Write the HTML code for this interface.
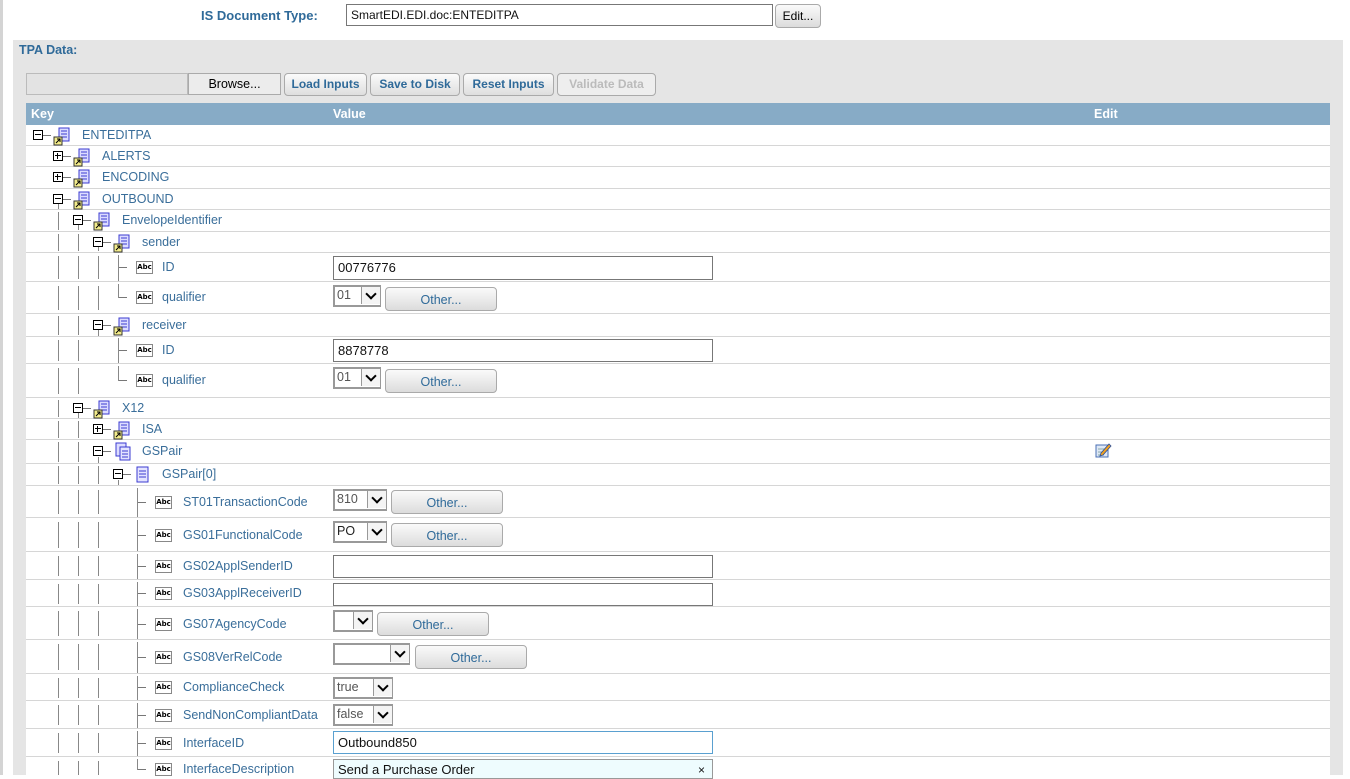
<!DOCTYPE html>
<html><head><meta charset="utf-8">
<style>
*{box-sizing:border-box;margin:0;padding:0}
body{width:1350px;height:775px;overflow:hidden;background:#fff;font-family:"Liberation Sans",Arial,sans-serif;font-size:12px;position:relative}
.a{position:absolute}
.lbl{position:absolute;color:#3a6e9a;font-size:12.5px;white-space:nowrap;line-height:14px}
.row{position:absolute;left:26px;width:1304px;border-bottom:1px solid #d6d6d6;background:#fff}
.box{position:absolute;width:10px;height:10px;border:1px solid #000;background:#fff}
.box:before{content:"";position:absolute;left:1px;top:3px;width:6px;height:1px;background:#000}
.box.p:after{content:"";position:absolute;left:3px;top:1px;width:1px;height:6px;background:#000}
.tk{position:absolute;height:1px;width:8px;background:#777}
.v{position:absolute;width:1px;background:#888}
.abc{position:absolute;width:17px;height:13px;border:1px solid #888;font-size:7px;font-weight:bold;line-height:11px;text-align:center;color:#000;background:#fff;font-family:"DejaVu Sans",sans-serif}
.inp{position:absolute;border:1px solid #777;background:#fff;height:23px;font-size:13px;padding:3px 4px;color:#111;width:380px;left:333px}
.sel{position:absolute;border:2px solid #999;border-right:1px solid #999;background:#fff;height:21px;font-size:12.5px;color:#555;padding:1px 2px;left:333px}
.sel i{position:absolute;right:0;top:0;width:19px;height:17px;border-left:1px solid #999;background:#f4f4f4}
.sel i:after{content:"";position:absolute;left:5px;top:3px;width:6px;height:6px;border-right:2px solid #000;border-bottom:2px solid #000;transform:rotate(45deg)}
.oth{position:absolute;height:24px;border:1px solid #aaa;border-radius:4px;background:linear-gradient(#fafafa,#dcdcdc);color:#2f6a99;font-size:12.5px;text-align:center;line-height:24px;width:112px}
.btn{position:absolute;top:73px;height:23px;border:1px solid #aaa;border-radius:4px;background:linear-gradient(#fbfbfb,#dedede);color:#2f6a99;font-weight:bold;font-size:12px;text-align:center;line-height:21px}
</style></head><body>
<svg width="0" height="0" style="position:absolute"><defs>
<symbol id="doc" viewBox="0 0 18 20"><rect x="6" y="1" width="10" height="13" fill="#dcdcff" stroke="#3b3bd0"/><path d="M8 4h6M8 7h6M8 10h6" stroke="#3b3bd0"/><rect x="1" y="10" width="8" height="8" fill="#f3ec8a" stroke="#333"/><path d="M3 16l4-4M4 12h3v3" stroke="#000" fill="none"/></symbol>
<symbol id="dl" viewBox="0 0 18 20"><rect x="2" y="1" width="10" height="13" fill="#dcdcff" stroke="#3b3bd0"/><rect x="6" y="5" width="10" height="13" fill="#e4e4ff" stroke="#3b3bd0"/><path d="M8 9h6M8 12h6M8 15h6" stroke="#3b3bd0"/></symbol>
<symbol id="d1" viewBox="0 0 18 20"><rect x="4" y="2" width="11" height="15" fill="#e4e4ff" stroke="#3b3bd0"/><path d="M6 6h7M6 9h7M6 12h7" stroke="#3b3bd0"/></symbol>
</defs></svg>

<div class="a" style="left:0;top:0;width:3px;height:775px;background:#d4d4d4"></div>
<div class="a" style="left:201px;top:8px;font-weight:bold;color:#2f6a99;font-size:13px">IS Document Type:</div>
<div class="inp" style="left:346px;top:4px;width:427px;height:22px;font-size:12px;padding:3px 4px">SmartEDI.EDI.doc:ENTEDITPA</div>
<div class="oth" style="left:775px;top:4px;width:46px;height:24px;color:#000;font-size:12px;line-height:22px">Edit...</div>

<div class="a" style="left:13px;top:40px;width:1330px;height:735px;background:#e5e5e5"></div>
<div class="a" style="left:19px;top:43px;font-weight:bold;color:#2f6a99;font-size:12.5px">TPA Data:</div>
<div class="a" style="left:26px;top:73px;width:162px;height:22px;background:#e3e3e3;border:1px solid #bbb"></div>
<div class="a" style="left:188px;top:73px;width:93px;height:22px;background:#ececec;border:1px solid #aaa;text-align:center;line-height:20px;font-size:12.5px">Browse...</div>
<div class="btn" style="left:284px;width:83px">Load Inputs</div>
<div class="btn" style="left:370px;width:90px">Save to Disk</div>
<div class="btn" style="left:463px;width:91px">Reset Inputs</div>
<div class="btn" style="left:557px;width:99px;color:#bbb;background:#eee">Validate Data</div>

<div class="a" style="left:26px;top:103px;width:1304px;height:22px;background:#87abc6;color:#fff;font-weight:bold;font-size:12.5px">
<span class="a" style="left:5px;top:4px">Key</span><span class="a" style="left:307px;top:4px">Value</span><span class="a" style="left:1068px;top:4px">Edit</span></div>

<!-- rows -->
<div class="row" style="top:125px;height:21px"></div>
<div class="row" style="top:146px;height:21px"></div>
<div class="row" style="top:167px;height:22px"></div>
<div class="row" style="top:189px;height:21px"></div>
<div class="row" style="top:210px;height:22px"></div>
<div class="row" style="top:232px;height:21px"></div>
<div class="row" style="top:253px;height:29px"></div>
<div class="row" style="top:282px;height:32px"></div>
<div class="row" style="top:314px;height:23px"></div>
<div class="row" style="top:337px;height:27px"></div>
<div class="row" style="top:364px;height:34px"></div>
<div class="row" style="top:398px;height:21px"></div>
<div class="row" style="top:419px;height:21px"></div>
<div class="row" style="top:440px;height:24px"></div>
<div class="row" style="top:464px;height:22px"></div>
<div class="row" style="top:486px;height:32px"></div>
<div class="row" style="top:518px;height:34px"></div>
<div class="row" style="top:552px;height:28px"></div>
<div class="row" style="top:580px;height:27px"></div>
<div class="row" style="top:607px;height:33px"></div>
<div class="row" style="top:640px;height:34px"></div>
<div class="row" style="top:674px;height:27px"></div>
<div class="row" style="top:701px;height:28px"></div>
<div class="row" style="top:729px;height:28px"></div>
<div class="row" style="top:757px;height:20px;border:none"></div>

<!-- vertical segments -->
<div class="v" style="left:58px;top:200px;height:9px"></div>
<div class="v" style="left:58px;top:212px;height:18px"></div><div class="v" style="left:78px;top:221px;height:9px"></div>
<div class="v" style="left:58px;top:234px;height:17px"></div><div class="v" style="left:78px;top:234px;height:17px"></div><div class="v" style="left:98px;top:243px;height:8px"></div>
<!-- sender ID / qualifier -->
<div class="v" style="left:58px;top:256px;height:23px"></div><div class="v" style="left:78px;top:256px;height:23px"></div><div class="v" style="left:98px;top:256px;height:23px"></div><div class="v" style="left:118px;top:255px;height:26px"></div><div class="tk" style="left:119px;top:267px"></div>
<div class="v" style="left:58px;top:286px;height:24px"></div><div class="v" style="left:78px;top:286px;height:24px"></div><div class="v" style="left:98px;top:286px;height:24px"></div><div class="v" style="left:118px;top:284px;height:14px"></div><div class="tk" style="left:119px;top:297px"></div>
<!-- receiver -->
<div class="v" style="left:58px;top:316px;height:19px"></div><div class="v" style="left:78px;top:316px;height:19px"></div><div class="v" style="left:98px;top:330px;height:6px"></div>
<div class="v" style="left:58px;top:340px;height:21px"></div><div class="v" style="left:78px;top:340px;height:21px"></div><div class="v" style="left:118px;top:338px;height:25px"></div><div class="tk" style="left:119px;top:350px"></div>
<div class="v" style="left:58px;top:368px;height:26px"></div><div class="v" style="left:78px;top:368px;height:26px"></div><div class="v" style="left:118px;top:366px;height:15px"></div><div class="tk" style="left:119px;top:380px"></div>
<!-- X12 -->
<div class="v" style="left:58px;top:400px;height:17px"></div><div class="v" style="left:78px;top:413px;height:5px"></div>
<div class="v" style="left:58px;top:421px;height:17px"></div><div class="v" style="left:78px;top:421px;height:17px"></div>
<div class="v" style="left:58px;top:442px;height:20px"></div><div class="v" style="left:78px;top:442px;height:20px"></div><div class="v" style="left:98px;top:457px;height:6px"></div>
<div class="v" style="left:58px;top:466px;height:18px"></div><div class="v" style="left:78px;top:466px;height:18px"></div><div class="v" style="left:98px;top:466px;height:18px"></div><div class="v" style="left:118px;top:480px;height:5px"></div>

<!-- tree nodes -->
<div class="box" style="left:33px;top:130px"></div><div class="tk" style="left:43px;top:135px"></div><svg class="a" style="left:53px;top:127px" width="18" height="20"><use href="#doc"/></svg><div class="lbl" style="left:82px;top:128px">ENTEDITPA</div>
<div class="box p" style="left:53px;top:151px"></div><div class="tk" style="left:63px;top:156px"></div><svg class="a" style="left:73px;top:148px" width="18" height="20"><use href="#doc"/></svg><div class="lbl" style="left:102px;top:149px">ALERTS</div>
<div class="box p" style="left:53px;top:172px"></div><div class="tk" style="left:63px;top:177px"></div><svg class="a" style="left:73px;top:169px" width="18" height="20"><use href="#doc"/></svg><div class="lbl" style="left:102px;top:170px">ENCODING</div>
<div class="box" style="left:53px;top:194px"></div><div class="tk" style="left:63px;top:199px"></div><svg class="a" style="left:73px;top:191px" width="18" height="20"><use href="#doc"/></svg><div class="lbl" style="left:102px;top:192px">OUTBOUND</div>
<div class="box" style="left:73px;top:215px"></div><div class="tk" style="left:83px;top:220px"></div><svg class="a" style="left:93px;top:212px" width="18" height="20"><use href="#doc"/></svg><div class="lbl" style="left:122px;top:213px">EnvelopeIdentifier</div>
<div class="box" style="left:93px;top:237px"></div><div class="tk" style="left:103px;top:242px"></div><svg class="a" style="left:113px;top:234px" width="18" height="20"><use href="#doc"/></svg><div class="lbl" style="left:142px;top:235px">sender</div>
<div class="box" style="left:93px;top:320px"></div><div class="tk" style="left:103px;top:325px"></div><svg class="a" style="left:113px;top:317px" width="18" height="20"><use href="#doc"/></svg><div class="lbl" style="left:142px;top:318px">receiver</div>
<div class="box" style="left:73px;top:403px"></div><div class="tk" style="left:83px;top:408px"></div><svg class="a" style="left:93px;top:400px" width="18" height="20"><use href="#doc"/></svg><div class="lbl" style="left:122px;top:401px">X12</div>
<div class="box p" style="left:93px;top:424px"></div><div class="tk" style="left:103px;top:429px"></div><svg class="a" style="left:113px;top:421px" width="18" height="20"><use href="#doc"/></svg><div class="lbl" style="left:142px;top:422px">ISA</div>
<div class="box" style="left:93px;top:446px"></div><div class="tk" style="left:103px;top:451px"></div><svg class="a" style="left:114px;top:442px" width="18" height="20"><use href="#dl"/></svg><div class="lbl" style="left:142px;top:444px">GSPair</div>
<div class="box" style="left:113px;top:469px"></div><div class="tk" style="left:123px;top:474px"></div><svg class="a" style="left:133px;top:465px" width="18" height="20"><use href="#d1"/></svg><div class="lbl" style="left:162px;top:467px">GSPair[0]</div>

<!-- L4 leaves -->
<div class="abc" style="left:136px;top:261px">Abc</div><div class="lbl" style="left:162px;top:260px">ID</div>
<div class="inp" style="top:256px;height:24px">00776776</div>
<div class="abc" style="left:136px;top:291px">Abc</div><div class="lbl" style="left:162px;top:290px">qualifier</div>
<div class="sel" style="top:285px;width:48px;height:22px">01<i></i></div><div class="oth" style="left:385px;top:287px">Other...</div>
<div class="abc" style="left:136px;top:344px">Abc</div><div class="lbl" style="left:162px;top:343px">ID</div>
<div class="inp" style="top:339px">8878778</div>
<div class="abc" style="left:136px;top:374px">Abc</div><div class="lbl" style="left:162px;top:373px">qualifier</div>
<div class="sel" style="top:367px;width:48px;height:22px">01<i></i></div><div class="oth" style="left:385px;top:369px">Other...</div>

<!-- L5 leaves: per row lines -->
<div class="v" style="left:58px;top:490px;height:24px"></div><div class="v" style="left:78px;top:490px;height:24px"></div><div class="v" style="left:98px;top:490px;height:24px"></div><div class="v" style="left:137px;top:488px;height:29px"></div><div class="tk" style="left:138px;top:502px"></div>
<div class="v" style="left:58px;top:522px;height:26px"></div><div class="v" style="left:78px;top:522px;height:26px"></div><div class="v" style="left:98px;top:522px;height:26px"></div><div class="v" style="left:137px;top:520px;height:31px"></div><div class="tk" style="left:138px;top:535px"></div>
<div class="v" style="left:58px;top:556px;height:20px"></div><div class="v" style="left:78px;top:556px;height:20px"></div><div class="v" style="left:98px;top:556px;height:20px"></div><div class="v" style="left:137px;top:554px;height:25px"></div><div class="tk" style="left:138px;top:566px"></div>
<div class="v" style="left:58px;top:584px;height:20px"></div><div class="v" style="left:78px;top:584px;height:20px"></div><div class="v" style="left:98px;top:584px;height:20px"></div><div class="v" style="left:137px;top:582px;height:24px"></div><div class="tk" style="left:138px;top:593px"></div>
<div class="v" style="left:58px;top:611px;height:25px"></div><div class="v" style="left:78px;top:611px;height:25px"></div><div class="v" style="left:98px;top:611px;height:25px"></div><div class="v" style="left:137px;top:609px;height:30px"></div><div class="tk" style="left:138px;top:624px"></div>
<div class="v" style="left:58px;top:644px;height:26px"></div><div class="v" style="left:78px;top:644px;height:26px"></div><div class="v" style="left:98px;top:644px;height:26px"></div><div class="v" style="left:137px;top:642px;height:31px"></div><div class="tk" style="left:138px;top:657px"></div>
<div class="v" style="left:58px;top:678px;height:20px"></div><div class="v" style="left:78px;top:678px;height:20px"></div><div class="v" style="left:98px;top:678px;height:20px"></div><div class="v" style="left:137px;top:676px;height:24px"></div><div class="tk" style="left:138px;top:687px"></div>
<div class="v" style="left:58px;top:705px;height:20px"></div><div class="v" style="left:78px;top:705px;height:20px"></div><div class="v" style="left:98px;top:705px;height:20px"></div><div class="v" style="left:137px;top:703px;height:25px"></div><div class="tk" style="left:138px;top:715px"></div>
<div class="v" style="left:58px;top:733px;height:20px"></div><div class="v" style="left:78px;top:733px;height:20px"></div><div class="v" style="left:98px;top:733px;height:20px"></div><div class="v" style="left:137px;top:731px;height:25px"></div><div class="tk" style="left:138px;top:743px"></div>
<div class="v" style="left:58px;top:761px;height:14px"></div><div class="v" style="left:78px;top:761px;height:14px"></div><div class="v" style="left:98px;top:761px;height:14px"></div><div class="v" style="left:137px;top:759px;height:11px"></div><div class="tk" style="left:138px;top:769px"></div>

<div class="abc" style="left:155px;top:496px">Abc</div><div class="lbl" style="left:183px;top:495px">ST01TransactionCode</div>
<div class="sel" style="top:489px;width:54px;height:22px">810<i></i></div><div class="oth" style="left:391px;top:490px">Other...</div>
<div class="abc" style="left:155px;top:529px">Abc</div><div class="lbl" style="left:183px;top:528px">GS01FunctionalCode</div>
<div class="sel" style="top:521px;width:54px;height:22px;color:#222">PO<i></i></div><div class="oth" style="left:391px;top:523px">Other...</div>
<div class="abc" style="left:155px;top:560px">Abc</div><div class="lbl" style="left:183px;top:559px">GS02ApplSenderID</div>
<div class="inp" style="top:555px"></div>
<div class="abc" style="left:155px;top:587px">Abc</div><div class="lbl" style="left:183px;top:586px">GS03ApplReceiverID</div>
<div class="inp" style="top:583px"></div>
<div class="abc" style="left:155px;top:618px">Abc</div><div class="lbl" style="left:183px;top:617px">GS07AgencyCode</div>
<div class="sel" style="top:610px;width:40px;height:22px"><i></i></div><div class="oth" style="left:377px;top:612px">Other...</div>
<div class="abc" style="left:155px;top:651px">Abc</div><div class="lbl" style="left:183px;top:650px">GS08VerRelCode</div>
<div class="sel" style="top:643px;width:77px;height:22px"><i></i></div><div class="oth" style="left:415px;top:645px">Other...</div>
<div class="abc" style="left:155px;top:681px">Abc</div><div class="lbl" style="left:183px;top:680px">ComplianceCheck</div>
<div class="sel" style="top:677px;width:60px;height:22px">true<i></i></div>
<div class="abc" style="left:155px;top:709px">Abc</div><div class="lbl" style="left:183px;top:708px">SendNonCompliantData</div>
<div class="sel" style="top:704px;width:60px;height:22px">false<i></i></div>
<div class="abc" style="left:155px;top:737px">Abc</div><div class="lbl" style="left:183px;top:736px">InterfaceID</div>
<div class="inp" style="top:731px;border-color:#5aa0d0">Outbound850</div>
<div class="abc" style="left:155px;top:763px">Abc</div><div class="lbl" style="left:183px;top:762px">InterfaceDescription</div>
<div class="inp" style="top:759px;background:#eefcfe;border-color:#999;height:20px;padding-top:2px">Send a Purchase Order<span class="a" style="left:364px;top:3px;font-size:12px">×</span></div>

<!-- edit icon -->
<svg class="a" style="left:1095px;top:442px" width="17" height="17"><rect x="1" y="3" width="12" height="12" fill="#dfe8f5" stroke="#4a6fb5"/><path d="M3 7h7M3 10h5M3 13h6" stroke="#8aa"/><path d="M6 11l8-9 2 2-8 9-3 1z" fill="#f0a020" stroke="#2a4e9a" stroke-width=".8"/></svg>
</body>
</html>
